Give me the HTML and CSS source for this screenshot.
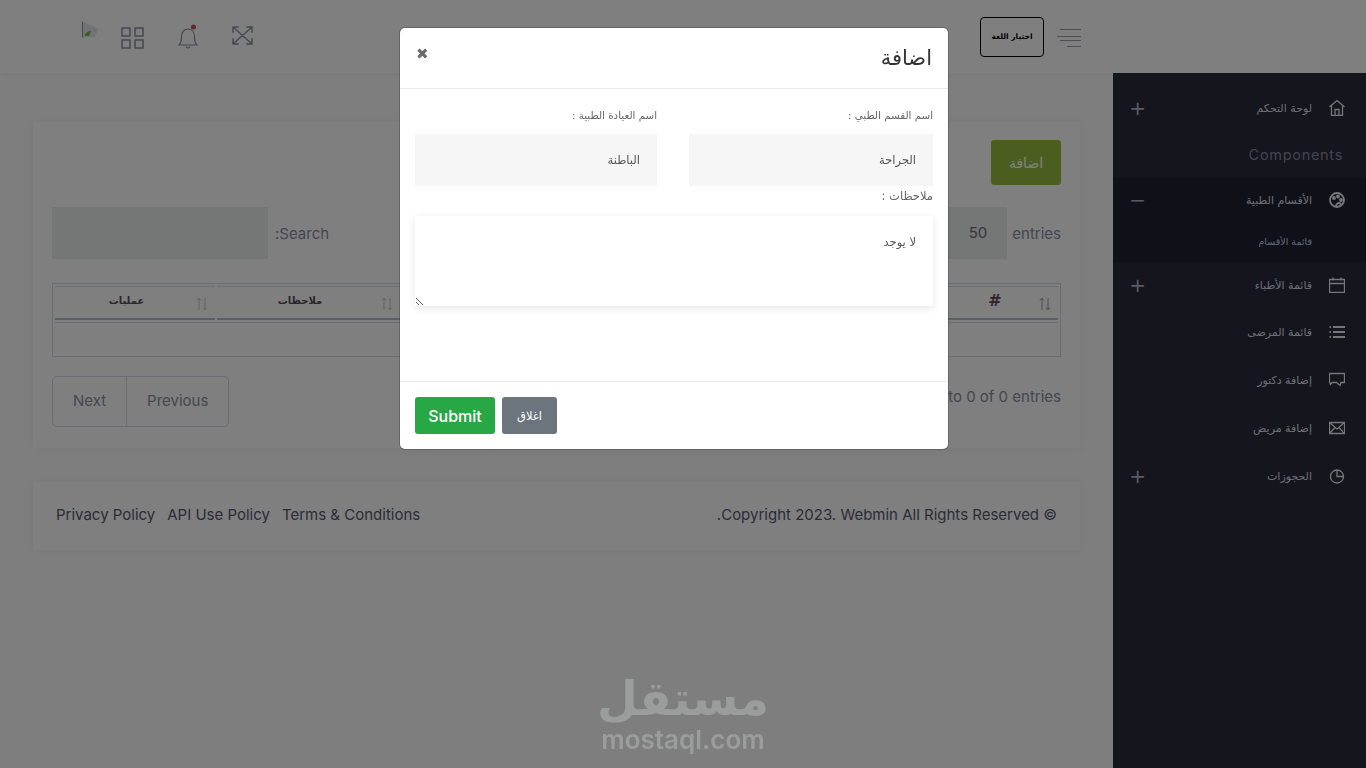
FILE: index.html
```html
<!DOCTYPE html>
<html lang="ar" dir="rtl">
<head>
  <meta charset="UTF-8" />
  <title>Webmin</title>
  <link rel="stylesheet" href="styles.css">
</head>
<body>
  <header class="topbar">
    <svg class="menu-icon" width="24" height="18" viewBox="0 0 24 18" fill="none" stroke="#9a9ca8" stroke-width="1">
      <path d="M3 .5h21M0 7.500h24M3 11.500h21M10 17.500h14" />
    </svg>
    <button class="lang-btn">اختيار اللغة</button>
    <div class="topbar-icons">
      <svg class="icon-expand" width="21" height="19" viewBox="0 0 22 20" fill="none" stroke="#8a90a0" stroke-width="1.500">
        <path d="M1 1l20 18M21 1L1 19M1 7V1h6M15 1h6v6M1 13v6h6M15 19h6v-6" />
      </svg>
      <svg class="icon-bell" width="20" height="25" viewBox="0 0 20 25" fill="none" stroke="#8a90a0" stroke-width="1.200">
        <path d="M1 21h18c-2-2-2.500-4-2.500-8 0-5-2.500-8-6.500-8s-6.500 3-6.500 8c0 4-.5 6-2.500 8zM8.500 22.500a1.500 1.500 0 0 0 3 0" />
        <circle cx="15.500" cy="3" r="2.500" fill="#b45c5c" stroke="none" />
      </svg>
      <svg class="icon-grid" width="23" height="22" viewBox="0 0 23 22" fill="none" stroke="#8a90a0" stroke-width="1.500">
        <rect x="1" y="1" width="8" height="8" />
        <rect x="14" y="1" width="8" height="8" />
        <rect x="1" y="13" width="8" height="8" />
        <rect x="14" y="13" width="8" height="8" />
      </svg>
      <svg class="broken-img" width="17" height="17" viewBox="0 0 17 17">
        <path d="M.5.500L17 8l-5 8.500H.5z" fill="#dfe9ee" />
        <path d="M.5.500V16.500" stroke="#8a90a0" fill="none" />
        <path d="M3 15c0-3 3-5 6-5l-2 5z" fill="#86b52c" />
      </svg>
    </div>
  </header>

  <div class="layout">
    <aside class="sidebar">
      <a class="side-item">
        <svg class="side-icon" viewBox="0 0 16 16"><path d="M.5 7l7.500-6.500L15.500 7M2.500 5.500V15.500h11V5.500M6 15.500V9.500h4v6" /></svg>
        <span class="side-label">لوحة التحكم</span>
        <span class="side-toggle">+</span>
      </a>
      <div class="side-title">Components</div>
      <div class="side-group">
        <a class="side-item short">
          <svg class="side-icon bold" viewBox="0 0 16 16"><circle cx="8" cy="8" r="7" /><circle cx="5" cy="6" r="1" /><circle cx="9" cy="4.500" r="1" /><circle cx="12" cy="8" r="1" /><path d="M8 15c-2-2 0-4 2-4s2 2 1 3" /></svg>
          <span class="side-label">الأقسام الطبية</span>
          <span class="side-toggle">−</span>
        </a>
        <a class="side-sub">قائمة الأقسام</a>
      </div>
      <a class="side-item tight">
        <svg class="side-icon" viewBox="0 0 16 16"><path d="M.5 2.500h15v13H.5zM.5 6.500h15M4 .5v3M12 .5v3" /></svg>
        <span class="side-label">قائمة الأطباء</span>
        <span class="side-toggle">+</span>
      </a>
      <a class="side-item">
        <svg class="side-icon bold" viewBox="0 0 16 16"><path d="M4 3h12M4 8h12M4 13h12M.5 3h1.500M.5 8h1.500M.5 13h1.500" /></svg>
        <span class="side-label">قائمة المرضى</span>
      </a>
      <a class="side-item">
        <svg class="side-icon" viewBox="0 0 16 16"><path d="M.5 1.500h15v9h-3.500l-1 3-3.500-3H3l-1.500 2-1-2z" /></svg>
        <span class="side-label">إضافة دكتور</span>
      </a>
      <a class="side-item">
        <svg class="side-icon" viewBox="0 0 16 16"><path d="M.5 2.500h15v11H.5zM.5 2.500L8 9l7.500-6.500M.5 13.500L6 7.500M15.500 13.500L10 7.500" /></svg>
        <span class="side-label">إضافة مريض</span>
      </a>
      <a class="side-item">
        <svg class="side-icon" viewBox="0 0 16 16"><circle cx="8" cy="8.500" r="6.500" /><path d="M8 2v6.500h6.500" /></svg>
        <span class="side-label">الحجوزات</span>
        <span class="side-toggle">+</span>
      </a>
    </aside>

    <main class="content">
      <section class="card">
        <button class="add-btn">اضافة</button>
        <div class="table-controls">
          <div class="length-ctl">
            <span>entries</span>
            <div class="fake-select">50</div>
          </div>
          <div class="search-ctl">
            <span>Search:</span>
            <div class="fake-search"></div>
          </div>
        </div>
        <table class="data-table">
          <thead>
            <tr>
              <th class="col-id"><svg class="sort on" viewBox="0 0 12 14"><path d="M3 13V1M1 3.500L3 1l2 2.500M9 1v12M7 10.500L9 13l2-2.500" /></svg>#</th>
              <th></th>
              <th></th>
              <th class="col-notes"><svg class="sort" viewBox="0 0 12 14"><path d="M3 13V1M1 3.500L3 1l2 2.500M9 1v12M7 10.500L9 13l2-2.500" /></svg>ملاحظات</th>
              <th class="col-ops"><svg class="sort" viewBox="0 0 12 14"><path d="M3 13V1M1 3.500L3 1l2 2.500M9 1v12M7 10.500L9 13l2-2.500" /></svg>عمليات</th>
            </tr>
          </thead>
          <tbody>
            <tr><td colspan="5"></td></tr>
          </tbody>
        </table>
        <div class="table-bottom">
          <div class="table-info">Showing 0 to 0 of 0 entries</div>
          <div class="pager">
            <a>Previous</a>
            <a>Next</a>
          </div>
        </div>
      </section>

      <footer class="card page-footer">
        <span>© Copyright 2023. Webmin All Rights Reserved.</span>
        <nav class="footer-links">
          <a>Terms &amp; Conditions</a>
          <a>API Use Policy</a>
          <a>Privacy Policy</a>
        </nav>
      </footer>
    </main>
  </div>

  <div class="backdrop">
    <div class="modal">
      <div class="modal-head">
        <h4>اضافة</h4>
        <span class="modal-close">✖</span>
      </div>
      <div class="modal-body">
        <div class="form-row">
          <div class="field">
            <label>اسم القسم الطبي :</label>
            <input type="text" value="الجراحة" />
          </div>
          <div class="field">
            <label>اسم العيادة الطبية :</label>
            <input type="text" value="الباطنة" />
          </div>
        </div>
        <label class="notes-label">ملاحظات :</label>
        <textarea>لا يوجد</textarea>
      </div>
      <div class="modal-foot">
        <button class="btn-close">اغلاق</button>
        <button class="btn-submit">Submit</button>
      </div>
    </div>
  </div>

  <div class="watermark">
    <div class="wm-ar">مستقل</div>
    <div class="wm-en">mostaql.com</div>
  </div>
</body>
</html>
```

FILE: styles.css
```css
:root {
  --page: #fcfdfc;
  --side: #282a3a;
  --side-dark: #202230;
  --side-text: #dcdfe6;
  --text: #8a8ca2;
  --line: #d5dbe6;
  --field: #e9efeb;
}

* {
  box-sizing: border-box;
}

html, body {
  margin: 0;
  height: 100%;
}

body {
  font-family: "Inter", "Liberation Sans", "DejaVu Sans", sans-serif;
  background-color: var(--page);
  color: var(--text);
  display: flex;
  flex-direction: column;
  min-height: 100vh;
  overflow: hidden;
}

/* top bar */
.topbar {
  height: 73px;
  flex: none;
  background-color: #fff;
  box-shadow: 0 2px 6px rgba(0, 0, 0, 0.04);
  display: flex;
  align-items: center;
  padding: 0 285px 0 82px;
}

.menu-icon {
  margin-top: 2px;
}

.lang-btn {
  width: 64px;
  height: 40px;
  margin-right: 13px;
  background: #fff;
  border: 1px solid #000;
  border-radius: 4px;
  color: #000;
  font-family: "DejaVu Sans", sans-serif;
  font-size: 7.500px;
  font-weight: 700;
  padding: 0;
}

.topbar-icons {
  margin-right: auto;
  display: flex;
  align-items: center;
}

.icon-expand {
  margin-top: -2px;
  margin-left: 1px;
}

.icon-bell {
  margin-right: 33px;
}

.icon-grid {
  margin-right: 34px;
  margin-top: 3px;
}

.broken-img {
  margin-right: 22px;
  margin-bottom: 15px;
}

.layout {
  flex: 1;
  display: flex;
  min-height: 0;
}

/* sidebar */
.sidebar {
  width: 253px;
  flex: none;
  background-color: var(--side);
  padding-top: 11px;
}

.side-item {
  display: flex;
  align-items: center;
  height: 48px;
  padding: 0 21px 0 21px;
  color: var(--side-text);
  font-family: "DejaVu Sans", sans-serif;
  font-size: 11px;
}

.side-item.short {
  height: 44px;
}

.side-item.tight {
  height: 46px;
}

.side-icon {
  width: 16px;
  height: 16px;
  flex: none;
  fill: none;
  stroke: #eceef2;
  stroke-width: 1.300;
  margin-left: 17px;
}

.side-icon.bold {
  stroke-width: 1.800;
}

.side-toggle {
  margin-right: auto;
  font-size: 20px;
  font-weight: 400;
  line-height: 1;
  width: 14px;
  text-align: center;
  margin-left: -2px;
  color: #b4b7c2;
}

.side-title {
  height: 46px;
  line-height: 46px;
  padding-right: 23px;
  font-size: 14.500px;
  letter-spacing: 0.7px;
  color: #8c889c;
  font-weight: 400;
}

.side-group {
  background-color: var(--side-dark);
}

.side-sub {
  display: block;
  height: 40px;
  line-height: 40px;
  padding-right: 54px;
  font-family: "DejaVu Sans", sans-serif;
  font-size: 9.500px;
  color: #c0cfe8;
}

/* main column */
.content {
  flex: 1;
  min-width: 0;
  padding: 49px 33px 0;
}

.card {
  background-color: #fff;
  box-shadow: 0 0 14px rgba(60, 70, 60, 0.08);
  padding: 18px 19px 21px;
}

.add-btn {
  display: block;
  width: 70px;
  height: 45px;
  background-color: #97bc41;
  border: none;
  border-radius: 3px;
  color: #fff;
  font-family: "DejaVu Sans", sans-serif;
  font-size: 14px;
}

.table-controls {
  display: flex;
  justify-content: space-between;
  margin-top: 22px;
  font-size: 15px;
}

.length-ctl, .search-ctl {
  display: flex;
  align-items: center;
  gap: 5px;
}

.search-ctl {
  gap: 7px;
}

.fake-select {
  width: 110px;
  height: 52px;
  line-height: 52px;
  background-color: var(--field);
  padding-right: 20px;
  color: #6a6c80;
}

.fake-search {
  width: 216px;
  height: 52px;
  background-color: var(--field);
}

.data-table {
  width: 100%;
  margin-top: 24px;
  border: 1px solid var(--line);
  border-spacing: 2px;
  table-layout: fixed;
}

.data-table th {
  height: 34px;
  position: relative;
  border-top: 1px solid var(--line);
  border-bottom: 2px solid #b9bfca;
  font-family: "DejaVu Sans", sans-serif;
  font-size: 10px;
  font-weight: 700;
  color: #5a4a58;
  padding-bottom: 6px;
}

.data-table td {
  height: 32px;
  border-top: 1px solid var(--line);
}

.data-table .col-id {
  width: 126px;
  font-size: 16px;
}

.col-notes {
  width: 183px;
  padding-right: 18px;
}

.col-ops {
  width: 160px;
  padding-right: 18px;
}

.sort {
  position: absolute;
  top: 10px;
  right: 7px;
  width: 12px;
  height: 14px;
  fill: none;
  stroke: #c3c5cc;
}

.sort.on {
  stroke: #9a9ca8;
}

.table-bottom {
  display: flex;
  justify-content: space-between;
  align-items: center;
  margin-top: 19px;
  font-size: 15px;
}

.table-info {
  margin-top: -11px;
}

.pager {
  display: flex;
  height: 51px;
  border: 1px solid var(--line);
  border-radius: 5px;
}

.pager a {
  display: flex;
  align-items: center;
  padding: 0 20px 2px;
}

.pager a + a {
  border-right: 1px solid var(--line);
  padding: 0 20px 2px;
}

.page-footer {
  display: flex;
  justify-content: space-between;
  align-items: center;
  height: 68px;
  margin-top: 34px;
  padding: 0 23px 4px;
  font-size: 15px;
  color: #565870;
}

.footer-links {
  display: flex;
  gap: 12px;
}

/* modal */
.backdrop {
  position: fixed;
  top: 0;
  right: 0;
  bottom: 0;
  left: 0;
  background-color: rgba(0, 0, 0, 0.5);
  display: flex;
  justify-content: center;
  align-items: flex-start;
  padding: 28px 18px 0 0;
}

.modal {
  width: 548px;
  height: 421px;
  background-color: #fff;
  border-radius: 5px;
  box-shadow: 0 0 0 1px rgba(0, 0, 0, 0.2);
  display: flex;
  flex-direction: column;
  font-family: "DejaVu Sans", sans-serif;
  color: #666;
}

.modal-head {
  height: 61px;
  flex: none;
  border-bottom: 1px solid #e9ecef;
  display: flex;
  justify-content: space-between;
  align-items: center;
  padding: 0 16px 0 16px;
}

.modal-head h4 {
  margin: 0;
  font-size: 21px;
  font-weight: 400;
  color: #333;
}

.modal-close {
  font-size: 15px;
  color: #6a6a6a;
  margin-top: -8px;
}

.modal-body {
  flex: 1;
  padding: 16px 15px 0;
}

.form-row {
  display: grid;
  grid-template-columns: 244px 242px;
  gap: 32px;
}

.field label {
  display: block;
  font-size: 10.300px;
  line-height: 20px;
  color: #666;
}

.notes-label {
  display: block;
  font-size: 11.500px;
  line-height: 20px;
  color: #666;
}

.field input {
  display: block;
  width: 100%;
  height: 52px;
  margin-top: 9px;
  padding: 0 17px 0 16px;
  background-color: #f6f6f6;
  border: none;
  font-family: inherit;
  font-size: 11.500px;
  color: #555;
}

textarea {
  display: block;
  width: 100%;
  height: 90px;
  margin-top: 10px;
  padding: 19px 17px 0 16px;
  border: none;
  outline: none;
  box-shadow: 0 2px 8px rgba(0, 0, 0, 0.1);
  font-family: inherit;
  font-size: 11.500px;
  color: #555;
}

.modal-foot {
  height: 68px;
  flex: none;
  border-top: 1px solid #e9ecef;
  display: flex;
  justify-content: flex-end;
  align-items: center;
  gap: 7px;
  padding: 0 15px;
}

.btn-submit, .btn-close {
  height: 37px;
  border: none;
  border-radius: 3px;
  color: #fff;
}

.btn-submit {
  width: 80px;
  background-color: #28a745;
  font-family: "Inter", sans-serif;
  font-size: 16px;
  font-weight: 500;
}

.btn-close {
  width: 55px;
  background-color: #6c757d;
  font-family: "DejaVu Sans", sans-serif;
  font-size: 11.500px;
}

/* site watermark burned into the shot */
.watermark {
  position: fixed;
  left: 583px;
  top: 670px;
  width: 200px;
  text-align: center;
  color: #9b9d9d;
}

.wm-ar {
  font-family: "DejaVu Sans", sans-serif;
  font-size: 47px;
  font-weight: 700;
  line-height: 57px;
}

.wm-en {
  font-family: "Inter", sans-serif;
  font-size: 26px;
  font-weight: 600;
  line-height: 26px;
}
```
